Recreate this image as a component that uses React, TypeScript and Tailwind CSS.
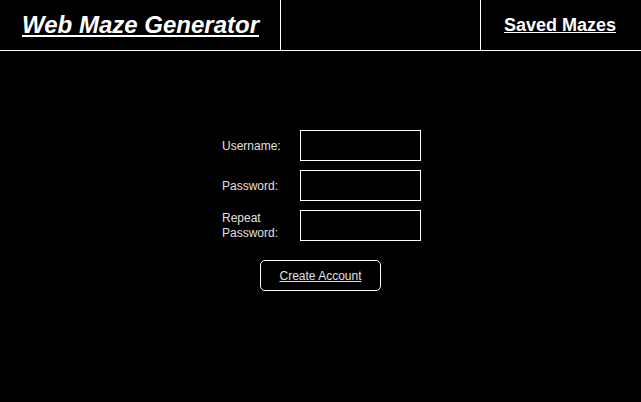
export default function App() {
  return (
    <div className="h-[402px] w-[641px] overflow-hidden bg-black text-white" style={{ fontFamily: '"Liberation Sans", Arial, sans-serif' }}>
      <header className="flex h-[51px] border-b border-white">
        <div className="flex w-[281px] items-center justify-center border-r border-white pl-[1px]">
          <a href="#" className="text-[24px] font-bold italic underline">Web Maze Generator</a>
        </div>
        <div className="w-[200px] border-r border-white"></div>
        <div className="flex flex-1 items-center justify-center pr-[2px]">
          <a href="#" className="text-[18px] font-bold underline">Saved Mazes</a>
        </div>
      </header>

      <main className="flex justify-center pl-[2px] pt-[79px]">
        <form className="flex flex-col items-center" onSubmit={(e) => e.preventDefault()}>
          <div className="grid grid-cols-[78px_121px] gap-y-[9px] text-[12px] text-[#e0e0e0]">
            <label className="flex items-center">Username:</label>
            <input className="h-[31px] border border-white bg-black" />
            <label className="flex items-center">Password:</label>
            <input type="password" className="h-[31px] border border-white bg-black" />
            <label className="flex items-center leading-[15px]">Repeat Password:</label>
            <input type="password" className="h-[31px] border border-white bg-black" />
          </div>
          <button className="mr-[2px] mt-[19px] h-[31px] w-[121px] rounded-[5px] border border-white text-[12px] text-[#e0e0e0] underline">
            Create Account
          </button>
        </form>
      </main>
    </div>
  );
}
